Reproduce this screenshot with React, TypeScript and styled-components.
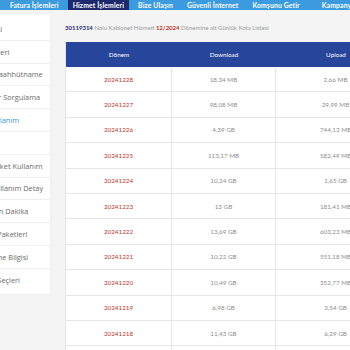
import React from "react";
import styled, { createGlobalStyle } from "styled-components";

const GlobalStyle = createGlobalStyle`
  html, body {
    margin: 0;
    padding: 0;
    background: #f4f4f4;
    font-family: Lato, "Open Sans", "Liberation Sans", sans-serif;
    overflow: hidden;
  }
`;

interface NavItemProps {
  active?: boolean;
}

interface MenuItemProps {
  active?: boolean;
}

interface CellProps {
  kind: "date" | "value";
}

const Page = styled.div`
  width: 350px;
  height: 350px;
  overflow: hidden;
`;

const TopNav = styled.nav`
  display: flex;
  align-items: stretch;
  height: 10px;
  background: #3c9ade;
  padding-left: 3px;
  white-space: nowrap;
`;

const NavItem = styled.div<NavItemProps>`
  display: flex;
  align-items: center;
  padding: 0 5px;
  margin: 0 2px;
  font-size: 6.8px;
  font-weight: 700;
  letter-spacing: 0.15px;
  color: #fff;
  background: ${(props) => (props.active ? "#1d2b6e" : "transparent")};
`;

const NavDivider = styled.div`
  width: 1px;
  margin: 1px 4px;
  background: rgba(255, 255, 255, 0.45);
`;

const Body = styled.div`
  display: flex;
  align-items: flex-start;
  padding-top: 4px;
`;

const Sidebar = styled.aside`
  flex: 0 0 90px;
  margin-left: -40px;
  background: #fff;
  box-shadow: 0 0 2px rgba(0, 0, 0, 0.06);
  padding: 4px 0 2px;
`;

const MenuItem = styled.div<MenuItemProps>`
  height: 22.8px;
  box-sizing: border-box;
  display: flex;
  align-items: center;
  padding-left: 10px;
  border-bottom: 1px solid #efefef;
  font-family: "Open Sans", Lato, sans-serif;
  font-size: 7.4px;
  color: ${(props) => (props.active ? "#3a9ad9" : "#6b6b6b")};
  white-space: nowrap;
  overflow: hidden;

  &:last-child {
    border-bottom: none;
  }
`;

const Main = styled.main`
  flex: 0 0 auto;
  margin-left: 15px;
  padding-top: 8px;
`;

const Title = styled.div`
  height: 10px;
  display: flex;
  align-items: center;
  font-size: 6px;
  color: #9a9a9a;
  white-space: nowrap;
  margin-bottom: 10px;
`;

const TitleStrong = styled.span`
  color: #1d2b6e;
  font-weight: 700;
`;

const TitleRed = styled.span`
  color: #c0392b;
  font-weight: 700;
`;

const Table = styled.div`
  width: 330px;
  background: #fff;
  border-left: 1px solid #e4e4e4;
`;

const HeaderRow = styled.div`
  display: grid;
  grid-template-columns: 106px 104px 120px;
  height: 25px;
  background: #27459b;
`;

const HeaderCell = styled.div`
  display: flex;
  align-items: center;
  justify-content: center;
  font-size: 6.3px;
  color: #fff;
`;

const Row = styled.div`
  display: grid;
  grid-template-columns: 106px 104px 120px;
  height: 25.4px;
  box-sizing: border-box;
  border-bottom: 1px solid #e6e6e6;
`;

const Cell = styled.div<CellProps>`
  display: flex;
  align-items: center;
  justify-content: center;
  font-size: 6.3px;
  color: ${(props) => (props.kind === "date" ? "#b8392c" : "#8d8d8d")};
  border-right: 1px solid #e6e6e6;
`;

const navItems = [
  "Fatura İşlemleri",
  "Hizmet İşlemleri",
  "Bize Ulaşın",
  "Güvenli İnternet",
  "Komşunu Getir",
];

const menu = [
  "Destek Al",
  "Hat Bilgileri",
  "Online Taahhütname",
  "Faturalar Sorgulama",
  "Kota Paylanım",
  "",
  "Ortak Paket Kullanım",
  "Paket Kullanım Detay",
  "Hat Kalan Dakika",
  "Tüm Ek Paketleri",
  "Hat Abone Bilgisi",
  "Ödeme Seçleri",
];

const rows = [
  ["20241228", "18,34 MB", "2,66 MB"],
  ["20241227", "98,08 MB", "29,99 MB"],
  ["20241226", "4,39 GB", "744,13 MB"],
  ["20241225", "113,17 MB", "582,49 MB"],
  ["20241224", "10,24 GB", "1,65 GB"],
  ["20241223", "13 GB", "181,41 MB"],
  ["20241222", "13,69 GB", "603,23 MB"],
  ["20241221", "10,22 GB", "551,18 MB"],
  ["20241220", "10,49 GB", "352,77 MB"],
  ["20241219", "6,98 GB", "3,54 GB"],
  ["20241218", "11,43 GB", "6,29 GB"],
  ["20241217", "9,12 GB", "1,02 GB"],
];

const App = () => {
  return (
    <Page>
      <GlobalStyle />
      <TopNav>
        {navItems.map((item) => (
          <NavItem key={item} active={item === "Hizmet İşlemleri"}>
            {item}
          </NavItem>
        ))}
        <NavDivider />
        <NavItem>Kampanyalı Ürünler</NavItem>
      </TopNav>
      <Body>
        <Sidebar>
          {menu.map((label, i) => (
            <MenuItem key={i} active={label === "Kota Paylanım"}>
              {label}
            </MenuItem>
          ))}
        </Sidebar>
        <Main>
          <Title>
            <TitleStrong>30119314</TitleStrong>&nbsp;Nolu Kablonet Hizmeti&nbsp;
            <TitleRed>12/2024</TitleRed>&nbsp;Dönemine ait Günlük Kota Listesi
          </Title>
          <Table>
            <HeaderRow>
              <HeaderCell>Dönem</HeaderCell>
              <HeaderCell>Download</HeaderCell>
              <HeaderCell>Upload</HeaderCell>
            </HeaderRow>
            {rows.map(([date, down, up]) => (
              <Row key={date}>
                <Cell kind="date">{date}</Cell>
                <Cell kind="value">{down}</Cell>
                <Cell kind="value">{up}</Cell>
              </Row>
            ))}
          </Table>
        </Main>
      </Body>
    </Page>
  );
};

export default App;
